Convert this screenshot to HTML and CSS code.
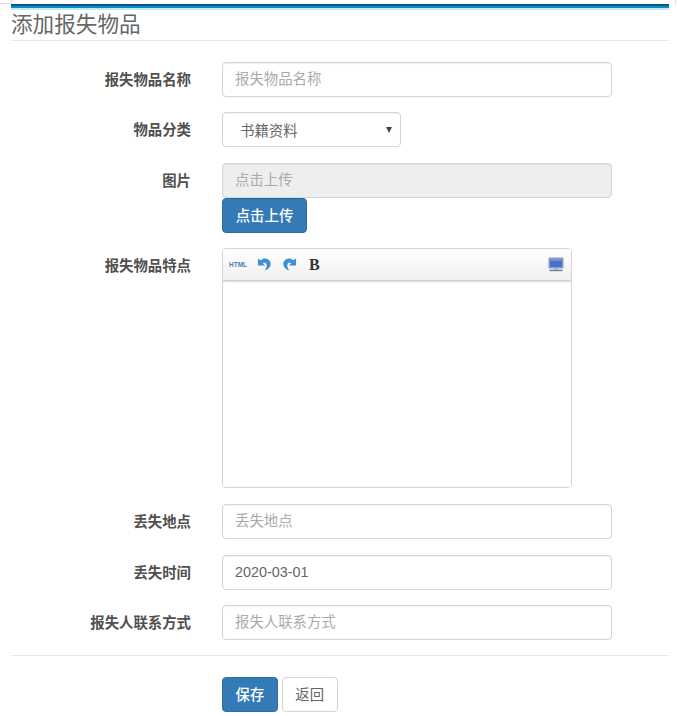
FILE: index.html
```html
<!DOCTYPE html>
<html lang="zh-CN">
<head>
<meta charset="utf-8">
<title>添加报失物品</title>
<link rel="stylesheet" href="styles.css">
</head>
<body>
<span class="crop crop-h"></span><span class="crop crop-v"></span><span class="crop crop-r"></span>
<main class="page">
  <div class="topbar"></div>
  <h1 class="title">添加报失物品</h1>
  <form class="form">
    <div class="row gap-15">
      <label class="label">报失物品名称</label>
      <input class="control wide" placeholder="报失物品名称">
    </div>
    <div class="row gap-16">
      <label class="label">物品分类</label>
      <div class="control select">书籍资料<span class="caret"></span></div>
    </div>
    <div class="row gap-15">
      <label class="label">图片</label>
      <div class="stack">
        <input class="control wide disabled" placeholder="点击上传" disabled>
        <button type="button" class="btn primary upload">点击上传</button>
      </div>
    </div>
    <div class="row gap-16">
      <label class="label">报失物品特点</label>
      <div class="editor">
        <div class="toolbar">
          <span class="tool-html">HTML</span>
          <svg class="tool undo" viewBox="0 0 16 16"><path d="M1 1.500v7.500h7.500L6.200 6.700c1.500-.9 3.200-.5 3.900.8.700 1.500.2 3.500-1.300 6l-.5 1c3.700-1.300 6.500-3.900 6.300-7.500C14.400 3.400 10.200.8 6.200 2 5.300 2.300 4.500 2.800 3.800 3.400z" fill="#3f8fd2"/></svg>
          <svg class="tool redo" viewBox="0 0 16 16"><path d="M15 1.500v7.500H7.500l2.300-2.300c-1.500-.9-3.200-.5-3.900.8-.7 1.500-.2 3.500 1.300 6l.5 1C4 13.200 1.200 10.600 1.400 7 1.600 3.400 5.800.8 9.800 2c.9.300 1.700.8 2.400 1.400z" fill="#3f8fd2"/></svg>
          <span class="tool-bold">B</span>
          <svg class="tool-screen" viewBox="0 0 16 15"><rect x=".5" y=".5" width="15" height="11" rx="1" fill="#8d9fb8"/><rect x="2" y="2" width="12" height="8" fill="#4a6fd0"/><rect x="2" y="2" width="12" height="2" fill="#6f8ee0"/><rect x="6" y="11.500" width="4" height="1.200" fill="#9aa8ba"/><rect x="1.500" y="12.700" width="13" height="1.500" fill="#6d8098"/></svg>
        </div>
        <div class="editor-body"></div>
      </div>
    </div>
    <div class="row gap-16">
      <label class="label">丢失地点</label>
      <input class="control wide short" placeholder="丢失地点">
    </div>
    <div class="row gap-15">
      <label class="label">丢失时间</label>
      <input class="control wide short" value="2020-03-01">
    </div>
    <div class="row gap-15">
      <label class="label">报失人联系方式</label>
      <input class="control wide short" placeholder="报失人联系方式">
    </div>
    <div class="actions">
      <button type="button" class="btn primary">保存</button>
      <button type="button" class="btn plain">返回</button>
    </div>
  </form>
</main>
</body>
</html>
```
FILE: styles.css
```css
* { box-sizing: border-box; }
html, body { margin: 0; background: #fff; }
body {
  font-family: "Liberation Sans", "Noto Sans CJK SC", sans-serif;
  font-size: 14.4px;
  color: #555;
  height: 716px;
  overflow: hidden;
  position: relative;
}
.crop { position: absolute; background: #ddd; }
.crop-h { left: 0; top: 3px; width: 11px; height: 1px; }
.crop-v { left: 11px; top: 0; width: 1px; height: 4px; }
.crop-r { left: 675px; top: 0; width: 1px; height: 4px; }
.page { margin: 0 9px 0 11px; padding-top: 4px; }
.topbar {
  height: 5.500px;
  background: linear-gradient(#0a5688 0 2px, #0f8cc4 2px 4.500px, #bfeafa 4.500px);
}
.title {
  margin: 0;
  height: 31.500px;
  border-bottom: 1px solid #e6e6e6;
  font-size: 21.600px;
  font-weight: 400;
  line-height: 29px;
  color: #666;
}
.form { padding-top: 21px; }
.row { display: flex; align-items: flex-start; }
.gap-15 { margin-bottom: 15px; }
.gap-16 { margin-bottom: 16px; }
.label {
  width: 180px;
  margin-right: 31px;
  padding-top: 7px;
  line-height: 23px;
  text-align: right;
  font-weight: 700;
  color: #505050;
}
.control {
  display: block;
  height: 35px;
  padding: 0 12px 1px;
  border: 1px solid #d4d4d4;
  border-radius: 4px;
  background: #fff;
  font: inherit;
  color: #666;
  box-shadow: inset 0 1px 1px rgba(0, 0, 0, .06);
  outline: 0;
}
.control::placeholder { color: #aaa; opacity: 1; }
.wide { width: 390px; }
.short { height: 35px; }
.disabled { background: #eee; height: 34.500px; }
.select {
  position: relative;
  width: 179px;
  padding: 2px 0 0 17px;
  line-height: 33px;
}
.caret {
  position: absolute;
  right: 8px;
  top: 14px;
  width: 0;
  height: 0;
  border-left: 3px solid transparent;
  border-right: 3px solid transparent;
  border-top: 6px solid #444;
}
.stack { display: flex; flex-direction: column; gap: .500px; }
.btn {
  height: 35px;
  padding: 0 12.500px 2px;
  border: 1px solid;
  border-radius: 4px;
  font: inherit;
}
.primary { background: #337ab7; border-color: #2e6da4; color: #fff; font-weight: 500; }
.plain { background: #fff; border-color: #d4d4d4; color: #666; }
.upload { align-self: flex-start; width: 85px; padding: 0 0 2px; }
.editor {
  width: 350px;
  height: 240px;
  border: 1px solid #d4d4d4;
  border-radius: 4px;
  overflow: hidden;
}
.toolbar {
  position: relative;
  display: flex;
  align-items: center;
  height: 32px;
  padding: 0 7px 0 6px;
  background: linear-gradient(#fff, #f0f0f0);
  border-bottom: 1px solid #ccc;
  box-shadow: 0 1px 2px rgba(0, 0, 0, .15);
}
.tool-html {
  width: 20px;
  font-size: 6.500px;
  font-weight: 700;
  color: #4a7fb5;
  margin-right: 8px;
}
.tool { width: 15px; height: 15px; flex: none; }
.undo { margin-right: 10px; }
.redo { margin-right: 12px; }
.tool-bold {
  font-family: "Liberation Serif", serif;
  font-size: 16px;
  font-weight: 700;
  color: #333;
}
.tool-screen { width: 16px; height: 15px; margin-left: auto; }
.editor-body { height: 207px; background: #fff; }
.actions {
  display: flex;
  gap: 4px;
  height: 57px;
  padding: 21px 0 0 211px;
  border-top: 1px solid #e6e6e6;
}
```
